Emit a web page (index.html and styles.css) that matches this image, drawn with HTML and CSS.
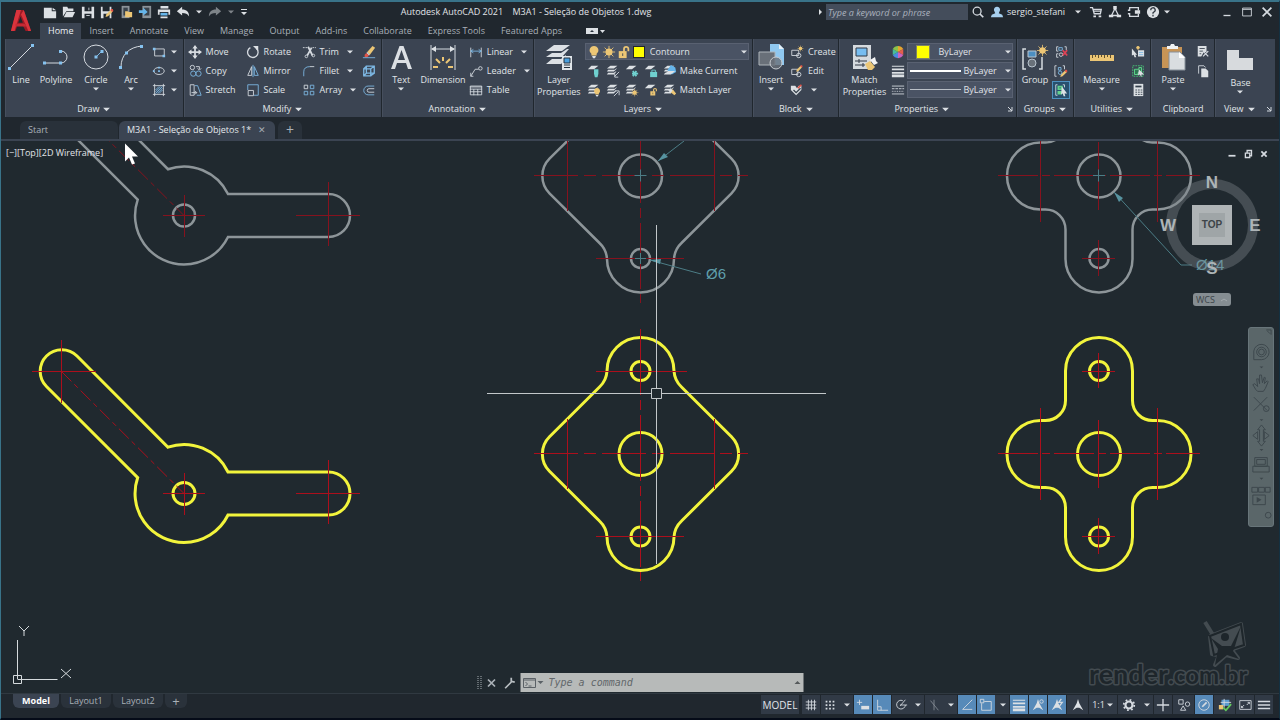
FILE: index.html
```html
<!DOCTYPE html>
<html lang="en">
<head>
<meta charset="utf-8">
<title>Autodesk AutoCAD 2021 - M3A1 - Seleção de Objetos 1.dwg</title>
<link rel="stylesheet" href="styles.css">
</head>
<body>
<svg class="defs" aria-hidden="true">
  <symbol id="caret" viewBox="0 0 8 8"><path class="fw" d="M1 2.500h6L4 5.500z"/></symbol>
  <symbol id="stack" viewBox="0 0 16 16"><path class="fw" d="M5 2h8l-4 3H1zM4 6.500h6l1.500-1.500h1L9 8.500H1l1.500-2zM4 10h5l2-1.500h1L9 12H1l1.500-2z"/></symbol>
  <symbol id="sheet" viewBox="0 0 16 16"><path class="fw" d="M5 2h8L8 6H1z"/></symbol>
  <symbol id="bulb" viewBox="0 0 16 16"><path class="fy" d="M8 1a5 5 0 0 0-3 9v2h6v-2a5 5 0 0 0-3-9z"/><path class="fw" d="M6 12.500h4v1L9 15H7l-1-1.500z"/></symbol>
  <symbol id="sun" viewBox="0 0 16 16"><circle class="fy" cx="8" cy="8" r="4"/><path class="y" d="M8 1v14M1 8h14M3 3l10 10M13 3L3 13"/></symbol>
  <symbol id="lock" viewBox="0 0 16 16"><path class="y" stroke-width="2" d="M8 8V4.500a2.500 2.500 0 0 1 5 0V7"/><path class="fy" d="M2 7h9v8H2z"/><path d="M6.500 9.500v3" stroke="#3b4552"/></symbol>
  <symbol id="pencil" viewBox="0 0 16 16"><path class="fy" d="M2 14l1-4 8-8 3 3-8 8z"/><path fill="#e05548" d="M10 3l1-2h3l1 3-2 2z"/></symbol>
  <symbol id="person" viewBox="0 0 16 16"><path class="fw" d="M8 1l1.500 5 4.500 8-4.500-3H6.500L2 14l4.500-8z"/></symbol>
</svg>

<div class="app">
<header class="top">
  <button class="logo" aria-label="Application menu"><svg viewBox="0 0 24 28"><path fill="#9c1a24" d="M7 2h8l8 23h-6l-3-6H8l-2 6H1z"/><path fill="#d9343d" d="M7 2h5L5 25H1zM15 2l8 23h-3L12 7z"/><path fill="#1f262d" d="M11.500 9l2.500 7H9z"/><path fill="#c52a34" d="M6 17h10l2 3H6z"/></svg></button>
  <div class="top-rows">
    <div class="titlebar">
      <div class="qat">
        <button aria-label="New"><svg class="i" viewBox="0 0 16 16"><path class="fw" d="M1 3h9v4h5v8H1zM11 3l4 3h-4z"/></svg></button>
        <button aria-label="Open"><svg class="i" viewBox="0 0 16 16"><path class="fw" d="M1 13V2h5l1 2h6v3H5zM5 8h10l-3 6H2z"/></svg></button>
        <button aria-label="Save"><svg class="i" viewBox="0 0 16 16"><path class="fw" fill-rule="evenodd" d="M1 2h14v13H1zM4 2v5h8V2zM4 10v5h8v-5z"/><path class="w" d="M6 12h4M9 3v3"/></svg></button>
        <button aria-label="Save as"><svg class="i" viewBox="0 0 16 16"><path class="fw" fill-rule="evenodd" d="M1 2h12v13H1zM3 2v5h8V2zM4 10v5h7v-5z"/><use href="#pencil" x="5" y="4" width="11" height="11"/></svg></button>
        <button aria-label="Open from web"><svg class="i" viewBox="0 0 16 16"><path fill="#8b9298" d="M3 1h9v14H3z"/><path fill="#39424b" d="M5 3h5v9H5z"/><path class="fy" d="M7 7h3l1 1h4v6H7z"/></svg></button>
        <button aria-label="Save to web"><svg class="i" viewBox="0 0 16 16"><path fill="#8b9298" d="M5 1h10v14H5z"/><path fill="#39424b" d="M7 3h6v9H7z"/><path fill="#65b5ea" d="M1 6h5V3l5 5-5 4V9H1z"/></svg></button>
        <button aria-label="Plot"><svg class="i" viewBox="0 0 16 16"><path class="fw" d="M4 1h9v3H4zM1 5h14v6h-2V8H3v3H1zM4 13h8v2H4z"/><path fill="#65b5ea" d="M4 9h8v3H4z"/></svg></button>
        <button aria-label="Undo"><svg class="i" viewBox="0 0 16 16"><path class="fw" d="M1 7l6-5v3c5 0 8 3 8 8-2-3-4-4-8-4v3z"/></svg></button>
        <button class="narrow" aria-label="Undo list"><svg class="caret"><use href="#caret"/></svg></button>
        <button class="dim" aria-label="Redo"><svg class="i" viewBox="0 0 16 16"><path class="fw" d="M15 7L9 2v3C4 5 1 8 1 13c2-3 4-4 8-4v3z"/></svg></button>
        <button class="narrow dim" aria-label="Redo list"><svg class="caret"><use href="#caret"/></svg></button>
        <button class="narrow" aria-label="Customize toolbar"><svg class="caret" viewBox="0 0 8 8"><path class="fw" d="M1 1h6v1H1zM1 4h6L4 7z"/></svg></button>
      </div>
      <h1>Autodesk AutoCAD 2021 &nbsp;&nbsp; M3A1 - Seleção de Objetos 1.dwg</h1>
      <button class="narrow" aria-label="Collapse search"><svg class="caret" viewBox="0 0 8 8"><path class="fw" d="M3 1l3 3-3 3z"/></svg></button>
      <input class="search" type="search" aria-label="Search help" placeholder="Type a keyword or phrase">
      <button class="tb" aria-label="Search"><svg class="i" viewBox="0 0 16 16"><circle class="w" cx="7" cy="7" r="4.500" stroke-width="1.500"/><path class="w" stroke-width="2" d="M10 10l4 4"/></svg></button>
      <button class="user"><svg class="i" viewBox="0 0 16 16"><path fill="#a6cfee" d="M8 2a3.500 3.500 0 0 0-3.500 4L6 9.500 2 11l-1 3h14l-1-3-4-1.500L11.500 6A3.500 3.500 0 0 0 8 2z"/></svg>sergio_stefani<svg class="caret"><use href="#caret"/></svg></button>
      <div class="services">
        <button aria-label="App store"><svg class="i" viewBox="0 0 16 16"><path class="w" stroke-width="1.500" d="M1 3h3l2 7h7l1-5H5M5 7h9"/><path class="fw" d="M5 12h3v2H5zM11 12h3v2h-3z"/></svg></button>
        <button aria-label="Autodesk account"><svg class="i" viewBox="0 0 16 16"><path class="w" stroke-width="1.500" d="M8 4L4 12h8z"/><path class="fw" d="M6 1h4v4H6zM1 11h5v3H1zM10 11h5v3h-5z"/></svg></button>
        <button aria-label="Stay connected"><svg class="i" viewBox="0 0 16 16"><path class="w" stroke-width="1.500" d="M1 6h2V3h10v3M1 10h2v3h10v-3"/><path class="fw" d="M9 6h6v4H9z"/></svg></button>
        <button aria-label="Help"><svg class="i" viewBox="0 0 16 16"><circle class="fw" cx="8" cy="8" r="7"/><path stroke="#303841" stroke-width="1.500" d="M5.500 6a2.500 2.500 0 1 1 3.500 2l-1 1v1M8 11v2"/></svg></button>
        <button class="narrow" aria-label="Help menu"><svg class="caret"><use href="#caret"/></svg></button>
      </div>
      <div class="window">
        <button aria-label="Minimize"><svg class="i" viewBox="0 0 16 16"><path class="w" stroke-width="1.500" d="M4 12h8"/></svg></button>
        <button aria-label="Maximize"><svg class="i" viewBox="0 0 16 16"><path class="w" d="M3 3.500h10v9H3zM3 5h10"/></svg></button>
        <button aria-label="Close"><svg class="i" viewBox="0 0 16 16"><path class="w" stroke-width="2" d="M3 3l10 10M13 3L3 13"/></svg></button>
      </div>
    </div>
    <nav class="tabs">
      <button class="on">Home</button><button>Insert</button><button>Annotate</button><button>View</button><button>Manage</button><button>Output</button><button>Add-ins</button><button>Collaborate</button><button>Express Tools</button><button>Featured Apps</button>
      <button class="minrib" aria-label="Minimize ribbon"><svg width="20" height="8" viewBox="0 0 20 8"><path class="fw" d="M0 1h12v6H0z"/><path fill="#28303a" d="M4 5h4L6 3z"/><path class="fw" d="M14 3h5l-2.500 3z"/></svg></button>
    </nav>
  </div>
</header>

<section class="ribbon">
  <div class="panel draw">
    <div class="tools">
      <button class="big w30"><svg class="bi" viewBox="0 0 28 28"><path class="w" d="M3 25L25 3"/><path class="fb" d="M1 24h3v3H1zM24 1h3v3h-3z"/></svg>Line</button>
      <button class="big w40"><svg class="bi" viewBox="0 0 28 28"><path class="w" d="M2 20h17a6 6 0 0 0 0-12"/><path class="fb" d="M1 18.500h3v3H1zM17 18.500h3v3h-3zM17 7h3v3h-3z"/></svg>Polyline</button>
      <button class="big w40"><svg class="bi" viewBox="0 0 28 28"><circle class="w" cx="14" cy="14" r="12"/><path class="b" d="M14 14l6-6"/><path class="fb" d="M12.500 12.500h3v3h-3zM18.500 7h3v3h-3z"/></svg>Circle<svg class="caret"><use href="#caret"/></svg></button>
      <button class="big w30"><svg class="bi" viewBox="0 0 28 28"><path class="w" d="M4 24C4 12 12 4 25 3"/><path class="fb" d="M2 23h3v3H2zM8 8.500h3v3H8zM23 2h3v3h-3z"/></svg>Arc<svg class="caret"><use href="#caret"/></svg></button>
      <div class="col first">
        <button aria-label="Rectangle"><svg class="i" viewBox="0 0 16 16"><path class="w" d="M3 4.500h11v8H3z"/><path class="fb" d="M1 3h3v3H1zM12 11h3v3h-3z"/></svg><svg class="caret"><use href="#caret"/></svg></button>
        <button aria-label="Ellipse"><svg class="i" viewBox="0 0 16 16"><ellipse class="w" cx="8" cy="8" rx="6" ry="4"/><path class="fb" d="M7 7h2v2H7zM1 7h2v2H1zM7 3h2v2H7z"/></svg><svg class="caret"><use href="#caret"/></svg></button>
        <button aria-label="Hatch"><svg class="i" viewBox="0 0 16 16"><path class="w" d="M3 1v14M13 1v14M1 3h14M1 13h14"/><path class="b" d="M4 8l4-4M4 12l8-8M8 12l4-4M4 10l6-6M6 12l6-6"/></svg><svg class="caret"><use href="#caret"/></svg></button>
      </div>
    </div>
    <button class="ptitle">Draw<svg class="caret"><use href="#caret"/></svg></button>
  </div>

  <div class="panel modify">
    <div class="tools">
      <div class="col w58">
        <button><svg class="i" viewBox="0 0 16 16"><path class="w" stroke-width="2" d="M8 3v10M3 8h10"/><path class="fw" d="M8 0l3 4H5zM8 16l3-4H5zM0 8l4-3v6zM16 8l-4-3v6z"/></svg>Move</button>
        <button><svg class="i" viewBox="0 0 16 16"><circle class="w" cx="5" cy="4" r="2.500"/><circle class="b" cx="6" cy="11" r="3"/><circle class="b" cx="12" cy="11" r="3"/><path class="w" d="M9 3h4v3M11 5l2 2 2-2"/></svg>Copy</button>
        <button><svg class="i" viewBox="0 0 16 16"><path class="w" d="M2.500 2v12H7V2zM4 11h6M8 9l2 2-2 2"/><path class="b" d="M8 3h3l4 11h-5"/></svg>Stretch</button>
      </div>
      <div class="col w56">
        <button><svg class="i" viewBox="0 0 16 16"><path class="w" stroke-width="1.500" d="M12 4a6 6 0 1 1-7-1"/><path class="fw" d="M8 1h6v6z"/></svg>Rotate</button>
        <button><svg class="i" viewBox="0 0 16 16"><path class="w" d="M6.500 3v10H2z"/><path class="b" d="M9.500 3v10H14zM8 1v14"/></svg>Mirror</button>
        <button><svg class="i" viewBox="0 0 16 16"><path class="b" d="M2 8V2h12v12H9"/><path class="w" d="M2.500 8.500h6v6h-6z"/></svg>Scale</button>
      </div>
      <div class="col w60 pushed">
        <button><svg class="i" viewBox="0 0 16 16"><path class="w" stroke-dasharray="2 1" d="M1 3h5M12 3h4"/><path class="w" stroke-width="2" d="M7 2l5 10M11 3L6 12"/><circle class="w" cx="5" cy="13" r="1.500"/><circle class="w" cx="13" cy="12" r="1.500"/></svg><span>Trim</span><svg class="caret"><use href="#caret"/></svg></button>
        <button><svg class="i" viewBox="0 0 16 16"><path class="b" d="M2 14V9q0-6 7-6"/><path class="w" d="M9 3h5"/></svg><span>Fillet</span><svg class="caret"><use href="#caret"/></svg></button>
        <button><svg class="i" viewBox="0 0 16 16"><path class="w" d="M2.500 2.500h4v4h-4z"/><path class="b" d="M9.500 2.500h4v4h-4zM2.500 9.500h4v4h-4zM9.500 9.500h4v4h-4z"/></svg><span>Array</span><svg class="caret"><use href="#caret"/></svg></button>
      </div>
      <div class="col">
        <button aria-label="Erase"><svg class="i" viewBox="0 0 16 16"><path class="fy" d="M6 8l6-7 3 2-6 8z"/><path class="fw" d="M5 9l1-1 3 3-1 1z"/><path fill="#e05548" d="M3 11l2-2 3 3-2 2H3z"/><path class="b" d="M1 14.500h14"/></svg></button>
        <button aria-label="Explode"><svg class="i" viewBox="0 0 16 16"><path class="b" stroke-width="1.500" d="M2 5.500h8v8H2zM5 2.500h9v8H5zM2 5.500l3-3M10 5.500l4-3M10 13.500l4-3M2 13.500l3-3"/></svg></button>
        <button aria-label="Offset"><svg class="i" viewBox="0 0 16 16"><path class="w" d="M14 6.500H8a2 2 0 0 0 0 4h6"/><path class="b" d="M14 3.500H7a5 5 0 0 0 0 10h7"/></svg></button>
      </div>
    </div>
    <button class="ptitle">Modify<svg class="caret"><use href="#caret"/></svg></button>
  </div>

  <div class="panel annotation">
    <div class="tools">
      <button class="big w38"><svg class="bi" viewBox="0 0 28 28"><path class="fw" fill-rule="evenodd" d="M12.500 3h4L25 26h-4l-2-6h-9l-2 6H4zM14.500 7L11 17h7z"/></svg>Text<svg class="caret"><use href="#caret"/></svg></button>
      <button class="big w50"><svg class="bi" viewBox="0 0 28 28"><path class="w" d="M2 2v25M26 2v25M3 6h22"/><path class="fw" d="M2 6l5-3v6zM26 6l-5-3v6z"/><path class="y" stroke-width="2" d="M4 24h5M24 24h-5M7 16l4 4M21 16l-4 4M14 14v4"/></svg>Dimension</button>
      <div class="col pushed">
        <button><svg class="i" viewBox="0 0 16 16"><path class="w" d="M2 3v11M14 3v11"/><path class="b" d="M2 7h12M5 5L2 7l3 2M11 5l3 2-3 2"/></svg><span>Linear</span><svg class="caret"><use href="#caret"/></svg></button>
        <button><svg class="i" viewBox="0 0 16 16"><path class="w" d="M2 14l5-8h4M2 10v4h3"/><circle class="w" cx="13" cy="5" r="2"/></svg><span>Leader</span><svg class="caret"><use href="#caret"/></svg></button>
        <button><svg class="i" viewBox="0 0 16 16"><path class="w" d="M1.500 3.500h13v10h-13zM1 7h14M1 10h14M5.500 7v7M10 7v7M1 4.500h14"/></svg><span>Table</span></button>
      </div>
    </div>
    <button class="ptitle">Annotation<svg class="caret"><use href="#caret"/></svg></button>
  </div>

  <div class="panel layers">
    <div class="tools">
      <button class="big w48"><svg class="bi" viewBox="0 0 28 28"><path class="fw" d="M9 2h16l-8 6H1zM7 10h9l6-4h2l-7 8H1zM7 16h9l5-4v4l-5 5H1z"/><path fill="#e1e6ea" d="M17 13h10v14H17z"/><path fill="#4aa0df" stroke="#26323e" d="M19 15h6v5h-6z"/><path stroke="#26323e" d="M19 22h6M19 24.500h6"/></svg>Layer<br>Properties</button>
      <div class="stackcol">
        <label class="combo"><svg class="i"><use href="#bulb"/></svg><svg class="i"><use href="#sun"/></svg><svg class="i"><use href="#lock"/></svg><i class="swatch"></i><select aria-label="Layer"><option>Contourn</option></select><svg class="caret"><use href="#caret"/></svg></label>
        <div class="iconrow">
          <button aria-label="Layer off"><svg class="i" viewBox="0 0 16 16"><use href="#sheet"/><path fill="#6fd0cf" d="M8 6h5v5l-1 4H9l-1-4z"/></svg></button>
          <button aria-label="Isolate"><svg class="i" viewBox="0 0 16 16"><use href="#stack"/><path class="w" d="M15 9l-5 5M10 11v4h4"/></svg></button>
          <button aria-label="Freeze"><svg class="i" viewBox="0 0 16 16"><use href="#sheet"/><path stroke="#6fd0cf" stroke-width="2" d="M8 11h7M9 8l4 6M13 8l-4 6"/></svg></button>
          <button aria-label="Lock layer"><svg class="i" viewBox="0 0 16 16"><use href="#sheet"/><path stroke="#6fd0cf" d="M9 10V7h4v3"/><path fill="#6fd0cf" d="M7 9h8v6H7z"/></svg></button>
          <button><svg class="i" viewBox="0 0 16 16"><use href="#stack"/><path fill="#65b5ea" d="M5 7l4-6 5 3 1 5-5 3z"/><path class="fw" d="M6 8h8l-4 3H2z"/></svg>Make Current</button>
        </div>
        <div class="iconrow">
          <button aria-label="All layers on"><svg class="i" viewBox="0 0 16 16"><use href="#stack"/><use href="#bulb" x="6" y="5" width="11" height="11"/></svg></button>
          <button aria-label="Unisolate"><svg class="i" viewBox="0 0 16 16"><use href="#stack"/><path class="w" d="M9 15l5-5M10 9h5v5"/></svg></button>
          <button aria-label="Thaw"><svg class="i" viewBox="0 0 16 16"><use href="#stack"/><use href="#sun" x="6" y="6" width="10" height="10"/></svg></button>
          <button aria-label="Unlock layer"><svg class="i" viewBox="0 0 16 16"><use href="#sheet"/><use href="#lock" x="6" y="5" width="10" height="10"/></svg></button>
          <button><svg class="i" viewBox="0 0 16 16"><use href="#stack"/><path class="fy" d="M8 10l3-3 4 5-2 2z"/><path class="fw" d="M6 8l3-2 2 3-3 2z"/></svg>Match Layer</button>
        </div>
      </div>
    </div>
    <button class="ptitle">Layers<svg class="caret"><use href="#caret"/></svg></button>
  </div>

  <div class="panel block">
    <div class="tools">
      <button class="big w34"><svg class="bi" viewBox="0 0 28 28"><path fill="#8fc8f0" d="M13 1h9l5 5v16H13z"/><path fill="#e6f1f8" d="M22 1l5 5h-5z"/><path fill="#697079" stroke="#aeb4ba" d="M2 9h16v13H2z"/><circle fill="#697079" fill-opacity=".8" stroke="#c7ccd1" cx="19" cy="20" r="6"/></svg>Insert<svg class="caret"><use href="#caret"/></svg></button>
      <div class="col">
        <button><svg class="i" viewBox="0 0 16 16"><path class="w" d="M2 6h8v6H2z"/><circle class="w" cx="10" cy="12" r="2.500"/><use href="#sun" x="8" y="0" width="8" height="8"/></svg>Create</button>
        <button><svg class="i" viewBox="0 0 16 16"><path class="w" d="M2 6h7v6H2z"/><circle class="w" cx="10" cy="12" r="2.500"/><use href="#pencil" x="6" y="1" width="9" height="9"/></svg>Edit</button>
        <button aria-label="Edit attributes"><svg class="i" viewBox="0 0 16 16"><path class="fw" d="M1 3h5l2 3 2-3h3v5l-6 6-6-6z"/><path stroke="#35404c" stroke-width="1.500" d="M4 8l3 3 5-5"/><path stroke="#e05548" stroke-width="2" d="M9 6l4-4"/></svg><svg class="caret"><use href="#caret"/></svg></button>
      </div>
    </div>
    <button class="ptitle">Block<svg class="caret"><use href="#caret"/></svg></button>
  </div>

  <div class="panel properties">
    <div class="tools">
      <button class="big w48"><svg class="bi" viewBox="0 0 28 28"><path fill="#d5dade" d="M3 2h18v24H3z"/><path fill="#77bdf0" stroke="#303944" d="M6 5h11v8H6z"/><path stroke="#303944" d="M5 18h12M5 22h10M9 16v4M13 20v4"/><path class="fy" d="M15 21l5-3 5 6-3 3h-4z"/><path fill="#f3f4f5" d="M20 17l5-3 1 4 2 2-4 2z"/></svg>Match<br>Properties</button>
      <div class="col props">
        <svg class="i" viewBox="0 0 16 16"><path fill="#e5a62f" d="M8 8V1a7 7 0 0 1 6 3.500z"/><path fill="#e35f4d" d="M8 8l6-3.500v7z"/><path fill="#cf63bd" d="M8 8l6 3.500A7 7 0 0 1 8 15z"/><path fill="#4b8be0" d="M8 8v7a7 7 0 0 1-6-3.500z"/><path fill="#48bd9a" d="M8 8l-6 3.500v-7z"/><path fill="#8bc34a" d="M8 8L2 4.500A7 7 0 0 1 8 1z"/></svg>
        <svg class="i" viewBox="0 0 16 16"><path class="fw" d="M1 2h14v1H1zM1 5h14v2H1zM1 9h14v2H1zM1 12h14v3H1z"/></svg>
        <svg class="i" viewBox="0 0 16 16"><path class="w" d="M1 3.500h14M1 12.500h14"/><path class="w" stroke-dasharray="3 1" d="M1 6.500h14"/><path class="w" stroke-dasharray="1 1" d="M1 9.500h14"/></svg>
      </div>
      <div class="selects">
        <label class="combo"><i class="swatch far"></i><select aria-label="Object color"><option>ByLayer</option></select><svg class="caret"><use href="#caret"/></svg></label>
        <label class="combo"><i class="rule thick"></i><select aria-label="Lineweight"><option>ByLayer</option></select><svg class="caret"><use href="#caret"/></svg></label>
        <label class="combo"><i class="rule"></i><select aria-label="Linetype"><option>ByLayer</option></select><svg class="caret"><use href="#caret"/></svg></label>
      </div>
    </div>
    <div class="pfoot"><button class="ptitle">Properties<svg class="caret"><use href="#caret"/></svg></button><button class="launch" aria-label="Properties palette"><svg viewBox="0 0 8 8"><path class="w" d="M2 2l4 4M6 2v4H2"/></svg></button></div>
  </div>

  <div class="panel groups">
    <div class="tools">
      <button class="big w34"><svg class="bi" viewBox="0 0 28 28"><path class="w" stroke-width="1.500" d="M5 6H2v20h3M18 26h3V14"/><path fill="#4c8fc2" stroke="#b8c4ce" d="M7 8h8v6H7z"/><circle fill="#69717a" stroke="#b8c4ce" cx="11" cy="20" r="4"/><use href="#sun" x="15" y="1" width="13" height="13"/></svg>Group</button>
      <div class="col">
        <button aria-label="Ungroup"><svg class="i" viewBox="0 0 16 16"><path class="w" d="M5 2H3v5h2M12 2h2v4M5 10H3v4h2"/><path class="b" d="M5.500 3h4v3h-4z"/><circle class="w" cx="8" cy="11" r="2"/><path stroke="#df4255" stroke-width="2" d="M10 6l5 6M15 6l-5 6"/></svg></button>
        <button aria-label="Group edit"><svg class="i" viewBox="0 0 16 16"><path class="w" d="M3 2H1v12h2M10 2h2v4"/><path class="b" d="M5 4h3v3H5z"/><circle class="b" cx="7" cy="10" r="2"/><use href="#pencil" x="6" y="6" width="10" height="10"/></svg></button>
        <button class="active" aria-label="Group selection"><svg class="i" viewBox="0 0 16 16"><path class="w" d="M4 2H2v12h2M10 2h2v3"/><path stroke="#63d18e" stroke-width="2" d="M5 4h4v3H5zM5 10h3v2H5z"/><path class="fw" d="M9 4l6 8h-3l1 3h-2l-1-3-2 1z"/></svg></button>
      </div>
    </div>
    <button class="ptitle">Groups<svg class="caret"><use href="#caret"/></svg></button>
  </div>

  <div class="panel utilities">
    <div class="tools">
      <button class="big w54"><svg class="bi" viewBox="0 0 28 28"><path class="fy" d="M2 12h24v6H2z"/><path stroke="#61512d" d="M4.500 12v3M7.500 12v2M10.500 12v3M13.500 12v2M16.500 12v3M19.500 12v2M22.500 12v3"/></svg>Measure<svg class="caret"><use href="#caret"/></svg></button>
      <div class="col">
        <button aria-label="Quick select"><svg class="i" viewBox="0 0 16 16"><path class="fw" d="M1 4l6 7H5l1 3H4L3 11l-2 1zM8 6h7v7H8z"/><path class="b" d="M9 8.500h5M9 11h5"/><path class="y" stroke-width="2" d="M8 1v4M6 3h4"/></svg></button>
        <button aria-label="Select all"><svg class="i" viewBox="0 0 16 16"><path stroke="#48c877" stroke-dasharray="2 1" d="M2 2h12v12H2z"/><path fill="#2d7652" stroke="#63df91" d="M4 6h5V4h3v6H8v2H4z"/><path class="fw" d="M9 6l6 6h-3v3l-2-3-2 1z"/></svg></button>
        <button aria-label="Calculator"><svg class="i" viewBox="0 0 16 16"><path class="fw" d="M3 1h11v14H3z"/><path stroke="#35404c" stroke-width="2" d="M5 4h7"/><path stroke="#35404c" stroke-dasharray="2 1" d="M5 8h8M5 10.500h8M5 13h8"/></svg></button>
      </div>
    </div>
    <button class="ptitle">Utilities<svg class="caret"><use href="#caret"/></svg></button>
  </div>

  <div class="panel clipboard">
    <div class="tools">
      <button class="big w42"><svg class="bi" viewBox="0 0 28 28"><path fill="#c79456" d="M3 4h20v21H3z"/><path fill="#f1f3f4" d="M8 6V3h3l1-2h3l1 2h3v3z"/><path fill="#d9dde0" stroke="#87909a" d="M10 9h11l5 5v13H10z"/><path fill="#fff" d="M20 9l6 6h-6z"/></svg>Paste<svg class="caret"><use href="#caret"/></svg></button>
      <div class="col">
        <button aria-label="Cut"><svg class="i" viewBox="0 0 16 16"><path class="fw" d="M2 1h10v7H9l-3 5H2z"/><path stroke="#39434f" d="M4 4h6M4 7h4M4 10h2"/><path class="w" stroke-width="1.500" d="M8 7l6 6M14 7l-6 6"/></svg></button>
        <button aria-label="Copy clip"><svg class="i" viewBox="0 0 16 16"><path class="w" d="M3 11V2h6l2 2"/><path class="fw" d="M6 5h5l3 3v7H6z"/></svg></button>
      </div>
    </div>
    <button class="ptitle">Clipboard</button>
  </div>

  <div class="panel view">
    <div class="tools">
      <button class="big base w48"><svg class="bi" viewBox="0 0 28 28"><path fill="#d7dadd" d="M1 7h12v8h14v12H1z"/></svg>Base<svg class="caret"><use href="#caret"/></svg></button>
    </div>
    <div class="pfoot"><button class="ptitle">View<svg class="caret"><use href="#caret"/></svg></button><button class="launch" aria-label="View settings"><svg viewBox="0 0 8 8"><path class="w" d="M2 2l4 4M6 2v4H2"/></svg></button></div>
  </div>
</section>

<nav class="files">
  <button class="file">Start</button>
  <button class="file on">M3A1 - Seleção de Objetos 1*<span>✕</span></button>
  <button class="file add" aria-label="New drawing">+</button>
</nav>

<main class="canvas">
  <svg class="drawing" viewBox="1 141 1278 552" preserveAspectRatio="xMidYMid slice">
    <defs>
      <g id="lever">
        <path d="M168 447.200A49 49 0 0 1 228 472H328.500a21.500 21.500 0 0 1 0 43H228A49 49 0 0 1 184 542.500A49 49 0 0 1 137.700 477.600L46.500 386.500A21.500 21.500 0 0 1 77 356z"/>
        <circle cx="184" cy="493.500" r="11"/>
      </g>
      <g id="lever-axes">
        <path d="M32 371.500h64M61.500 340v63M163 493.500h42M184.500 473v42M296 493.500h64M328.500 460v64"/>
        <path stroke-dasharray="14 4 5 4" d="M61.500 371.500L184 493.500"/>
      </g>
      <g id="plate">
        <path d="M607 371A33.500 33.500 0 0 1 674 371A24 24 0 0 0 681.500 387L731.500 436.700A24.500 24.500 0 0 1 731.500 471.300L681.500 521A24 24 0 0 0 674 537A33.500 33.500 0 0 1 607 537A24 24 0 0 0 599.500 521L549.500 471.300A24.500 24.500 0 0 1 549.500 436.700L599.500 387A24 24 0 0 0 607 371z"/>
        <circle cx="640.500" cy="371" r="9.500"/><circle cx="640.500" cy="454" r="21.500"/><circle cx="640.500" cy="536.500" r="9.500"/>
      </g>
      <g id="plate-axes">
        <path stroke-dasharray="44 6 12 6" d="M534 453.500h214"/>
        <path stroke-dasharray="66 5 10 5" d="M640.500 329v252"/>
        <path d="M567.500 419v70M714.500 419v70M596 371.500h91M596 536.500h88"/>
      </g>
      <g id="cross">
        <path d="M1065.500 371a33.500 33.500 0 0 1 67 0v29.500a20 20 0 0 0 20 20h5a33.500 33.500 0 0 1 0 67h-5a20 20 0 0 0-20 20V537a33.500 33.500 0 0 1-67 0v-29.500a20 20 0 0 0-20-20h-5a33.500 33.500 0 0 1 0-67h5a20 20 0 0 0 20-20z"/>
        <circle cx="1099" cy="371" r="9.500"/><circle cx="1099" cy="454" r="21.500"/><circle cx="1099" cy="536.500" r="9.500"/>
      </g>
      <g id="cross-axes">
        <path stroke-dasharray="40 4 8 4" d="M998 453.500h202"/>
        <path d="M1040.500 408v92M1157.500 408v92M1082 371.500h33M1098.500 353v35M1082 536.500h33M1098.500 518v36M1098.500 420v68"/>
      </g>
    </defs>
    <g class="old" transform="translate(0 -278)"><use href="#lever"/><use href="#plate"/><use href="#cross"/></g>
    <g class="axis old-axis" transform="translate(0 -278)"><use href="#lever-axes"/><use href="#plate-axes"/><use href="#cross-axes"/></g>
    <g class="new"><use href="#lever"/><use href="#plate"/><use href="#cross"/></g>
    <g class="axis"><use href="#lever-axes"/><use href="#plate-axes"/><use href="#cross-axes"/></g>
    <g class="dims">
      <path d="M684 141l-26 20M650 260l51 14M634.500 175.500h12M640.500 169.500v12M635 258.500h11M640.500 253v11M1093 175.500h12M1098.500 169.500v12M1114 192l67 73h11"/>
      <path class="tip" d="M658 161l6-8 4 4zM650 260l11-1-1 5zM1114 192l9 6-4 4z"/>
      <text x="706" y="279">Ø6</text><text x="1196" y="270">Ø14</text>
    </g>
    <g class="crosshair"><path d="M487 393.500h164M662 393.500h164M656.500 225v163M656.500 399v165M651.500 388.500h10v10h-10z"/></g>
    <g class="ucs"><path d="M17.500 640v39M17.500 679.500h40M13.500 675.500h8v8h-8zM19 626l5 5 5-5M24 631v5M61 669l10 9M71 669l-10 9"/></g>
    <g class="watermark">
      <text x="1089" y="684" class="brand">render<tspan class="domain">.com.br</tspan></text>
      <path class="halo" d="M1205 622l8 13M1210 636l31-12 3 21-11 4M1210 636l2 18 5 1M1214 640l8 8-7 17 11-10 12 3-7-9 8-19"/>
      <path class="board" d="M1210 636l31-12 3 21-30 10z"/>
      <path class="body" d="M1211 638l11 8h9l10-20-6 20-2 5 6 8-12-4-12 10 3-16z"/>
      <circle class="body" cx="1225" cy="637" r="4"/>
    </g>
  </svg>
  <button class="viewlabel">[−][Top][2D Wireframe]</button>
  <svg class="pointer" viewBox="0 0 14 22"><path fill="#fff" d="M1 1v18l4-4 3 7 3-1-3-7h6z"/></svg>
  <div class="docwin">
    <button aria-label="Minimize drawing"><svg class="i" viewBox="0 0 16 16"><path class="w" stroke-width="2" d="M4 10h8"/></svg></button>
    <button aria-label="Restore drawing"><svg class="i" viewBox="0 0 16 16"><path class="w" stroke-width="1.500" d="M5 7h5v5H5zM7 7V4h5v6h-2"/></svg></button>
    <button aria-label="Close drawing"><svg class="i" viewBox="0 0 16 16"><path class="w" stroke-width="2" d="M5 5l6 6M11 5l-6 6"/></svg></button>
  </div>
  <div class="cube">
    <svg viewBox="0 0 104 104"><circle cx="52" cy="52" r="41" fill="none" stroke="#7c8589" stroke-opacity=".4" stroke-width="10"/><g class="compass"><text x="52" y="15">N</text><text x="8" y="58">W</text><text x="95" y="58">E</text><text x="52" y="101">S</text></g></svg>
    <button><span>TOP</span></button>
  </div>
  <button class="wcs">WCS<svg class="caret" viewBox="0 0 8 8"><path stroke="#a3aaae" d="M1 5l3-2 3 2"/></svg></button>
  <div class="navbar">
    <svg viewBox="0 0 25 200"><path class="nv" d="M18 2h5v5M19 3l3 3M5 33V24a8 8 0 1 1 8 9z"/><circle class="nv" cx="13" cy="25" r="5"/><circle class="nv" cx="13" cy="25" r="3"/><path class="nv" d="M7 64l-3-5 2-1 3 3-1-8h2l1 5V49h2l1 8 2-6 1 1-1 6 3-3 1 1-3 7-2 3H9zM5 72l14 14M19 72L5 86"/><circle class="nv" cx="18" cy="84" r="3"/><path class="nv" d="M13 101l4 5h-2v12h2l-4 5-4-5h2v-12H9zM4 112l5-4v8zM21 112l-5-4v8zM6 135h13v9H6zM8 137h9v5H8zM4 144h17v6H4zM3 166h6v5H3zM10 166h6v5h-6zM17 166h5v5h-5zM4 174h13v10H4z"/><path fill="#3d474c" d="M8 176l5 3-5 3zM11 40h4l-2 2zM11 95h4l-2 2zM11 126h4l-2 2zM11 156h4l-2 2z"/><circle class="nv" cx="20" cy="195" r="3"/></svg>
  </div>
  <div class="command">
    <svg class="grip" viewBox="0 0 6 16"><path stroke="#a8b0b5" stroke-dasharray="1 1" d="M1.500 1v14M4.500 1v14"/></svg>
    <button aria-label="Close command line"><svg class="i" viewBox="0 0 16 16"><path stroke="#aab1b7" stroke-width="2" d="M4 4l8 8M12 4l-8 8"/></svg></button>
    <button aria-label="Customize command line"><svg class="i" viewBox="0 0 16 16"><path stroke="#b6bcc0" stroke-width="2" d="M3 14l8-8M10 2v4l4 1"/></svg></button>
    <label class="cmdbox"><svg viewBox="0 0 22 12"><path stroke="#5b6166" d="M1 1.500h12v9H1zM1 3h12M3 5l2 2-2 2M6 9h3"/><path fill="#5b6166" d="M15 4h6l-3 3z"/></svg><input type="text" aria-label="Command" placeholder="Type a command"><svg class="caret" viewBox="0 0 8 8"><path fill="#55595b" d="M1 5h6L4 2z"/></svg></label>
  </div>
</main>

<footer class="bottom">
  <nav class="layouts"><button class="on">Model</button><button>Layout1</button><button>Layout2</button><button class="add" aria-label="New layout">+</button></nav>
  <div class="status">
    <button class="model">MODEL</button>
    <button aria-label="Grid"><svg class="i" viewBox="0 0 16 16"><path class="w" d="M5 2v12M8.500 2v12M12 2v12M2 4.500h12M2 8h12M2 11.500h12"/></svg></button>
    <button aria-label="Snap"><svg class="i" viewBox="0 0 16 16"><path class="w" stroke-width="2" stroke-dasharray="2 2" d="M3 4h10M3 8h10M3 12h10"/></svg></button>
    <button class="ar" aria-label="Snap menu"><svg class="caret"><use href="#caret"/></svg></button>
    <button class="on" aria-label="Dynamic input"><svg class="i" viewBox="0 0 16 16"><path class="w" d="M1 5h6M4 2v6"/><path class="fw" d="M6 9h9v4H6z"/></svg></button>
    <button class="on" aria-label="Ortho"><svg class="i" viewBox="0 0 16 16"><path class="w" d="M3 2v12h12M3 10h4v4"/></svg></button>
    <button aria-label="Polar tracking"><svg class="i" viewBox="0 0 16 16"><path class="w" d="M13 8a5 5 0 1 1-3-5M7 8h8M7 9l6-7"/></svg></button>
    <button class="ar" aria-label="Polar menu"><svg class="caret"><use href="#caret"/></svg></button>
    <button class="dim" aria-label="Isometric"><svg class="i" viewBox="0 0 16 16"><path class="w" d="M4 3l9 11M8 2v12"/></svg></button>
    <button class="ar" aria-label="Isometric menu"><svg class="caret"><use href="#caret"/></svg></button>
    <button class="on" aria-label="Object tracking"><svg class="i" viewBox="0 0 16 16"><path class="w" d="M14 2L3 13h11"/></svg></button>
    <button class="on" aria-label="Object snap"><svg class="i" viewBox="0 0 16 16"><path class="w" d="M6 4h8v10H3V6M1.500 1.500h4v4h-4z"/></svg></button>
    <button class="ar" aria-label="Snap list"><svg class="caret"><use href="#caret"/></svg></button>
    <button class="on" aria-label="Lineweight"><svg class="i" viewBox="0 0 16 16"><path class="fw" d="M1 2h14v1H1zM1 5h14v2H1zM1 9h14v2H1zM1 12h14v3H1z"/></svg></button>
    <button class="on" aria-label="Annotation visibility"><svg class="i" viewBox="0 0 16 16"><use href="#person"/><circle class="w" cx="12" cy="4" r="2"/></svg></button>
    <button class="on" aria-label="Auto scale"><svg class="i" viewBox="0 0 16 16"><use href="#person"/><path class="w" stroke-width="1.500" d="M13 1l-3 4h4l-3 4"/></svg></button>
    <button class="wd" aria-label="Annotation scale"><svg class="i"><use href="#person"/></svg></button>
    <button class="scale">1:1<svg class="caret"><use href="#caret"/></svg></button>
    <button class="wd" aria-label="Workspace"><svg class="i" viewBox="0 0 16 16"><circle class="w" cx="8" cy="8" r="4" stroke-width="2.500"/><circle class="w" cx="8" cy="8" r="6" stroke-width="2" stroke-dasharray="2 2.710"/></svg></button>
    <button class="ar" aria-label="Workspace menu"><svg class="caret"><use href="#caret"/></svg></button>
    <button aria-label="Annotation monitor"><svg class="i" viewBox="0 0 16 16"><path class="w" stroke-width="1.500" d="M8 1v14M1 8h14"/></svg></button>
    <button class="wd" aria-label="Isolate objects"><svg class="i" viewBox="0 0 16 16"><path class="w" d="M2 2h5v5H2zM7 9l-3 5h6z"/><circle class="w" cx="12" cy="7" r="2.500"/></svg></button>
    <button class="on" aria-label="Hardware acceleration"><svg class="i" viewBox="0 0 16 16"><circle class="w" cx="8" cy="8" r="6"/><path class="w" stroke-width="2" d="M6 10l5-5"/></svg></button>
    <button class="wd" aria-label="Drawing health"><svg class="i" viewBox="0 0 16 16"><path fill="#5c9bcf" d="M4 2h9v7H4z"/><path class="w" d="M7 1v10M3 5h12"/><path class="fy" d="M1 8h5v5H1z"/><path stroke="#63c95d" stroke-width="2" d="M6 11l3 3 6-7"/></svg></button>
    <button aria-label="Clean screen"><svg class="i" viewBox="0 0 16 16"><path class="w" d="M2 3h13v10H2zM4 11l3-3M10 8l3-3M4 9v2h2M11 5h2v2"/></svg></button>
    <button aria-label="Customization"><svg class="i" viewBox="0 0 16 16"><path class="w" stroke-width="1.500" d="M1 4h14M1 8h14M1 12h14"/></svg></button>
  </div>
</footer>
</div>
</body>
</html>
```
FILE: styles.css
```css
* { box-sizing: border-box; }
body { margin: 0; background: #050b18; color: #e0e4e9; font: 9px/12px "Open Sans", "Noto Sans", sans-serif; }
button, input, select { font: inherit; color: inherit; background: none; border: 0; padding: 0; margin: 0; }
button { display: flex; align-items: center; justify-content: center; white-space: nowrap; }
svg { display: block; flex: none; fill: none; }
.defs { position: absolute; width: 0; height: 0; }
.w { stroke: #d5dae0; }
.b { stroke: #7db8e4; }
.y { stroke: #ecc675; }
.fw { fill: #dce0e4; }
.fb { fill: #85c2ef; }
.fy { fill: #ecc675; }
.i { width: 14px; height: 14px; }
.bi { width: 28px; height: 28px; }
.caret { width: 8px; height: 8px; }
.dim { opacity: .5; }

.app { min-height: 100vh; display: flex; flex-direction: column; background: #20272e; border-top: 2px solid #397389; border-left: 1px solid #397389; border-right: 1px solid #133142; border-bottom: 2px solid #050b18; }

.top { display: flex; }
.logo { width: 39px; }
.logo svg { width: 22px; height: 28px; }
.top-rows { flex: 1; min-width: 0; }
.titlebar { display: flex; align-items: center; height: 21px; padding: 0 2px 1px 0; }
.qat { display: flex; }
.qat button { width: 19px; height: 20px; }
.qat .narrow { width: 13px; }
.titlebar h1 { flex: 1; margin: 0; padding-right: 12px; font-size: 9px; font-weight: 400; text-align: center; white-space: nowrap; }
.narrow { width: 12px; }
.search { width: 142px; height: 16px; background: #444d5b; padding: 0 2px; font-style: italic; }
.search::placeholder { color: #abb2be; }
.tb { width: 20px; }
.user { gap: 3px; padding-left: 2px; }
.user .caret { margin-left: 6px; }
.services { display: flex; margin: 0 45px 0 4px; }
.services button { width: 19px; }
.services .narrow { width: 10px; }
.window { display: flex; }
.window button { width: 20px; }
.tabs { display: flex; height: 16px; }
.tabs button { padding: 0 8px; color: #a9b0b8; }
.tabs .on { background: #3b4452; color: #eceff2; }
.tabs .minrib { padding-left: 16px; }

.ribbon { display: flex; gap: 1px; padding: 0 4px; height: 78px; }
.panel { background: #3b4452; min-width: 0; display: flex; flex-direction: column; border-left: 1px solid #464f5d; }
.draw { flex: 178 1 0; }
.modify { flex: 198 1 0; }
.annotation { flex: 151 1 0; }
.layers { flex: 219 1 0; }
.block { flex: 85 1 0; }
.properties { flex: 177 1 0; }
.groups { flex: 55 1 0; }
.utilities { flex: 76 1 0; }
.clipboard { flex: 63 1 0; }
.view { flex: 59 1 0; }
.tools { flex: 1; display: flex; padding-top: 3px; align-items: flex-start; }
.big { flex-direction: column; justify-content: flex-start; text-align: center; padding-top: 1px; }
.big .bi { margin-bottom: 3px; }
.big .caret { margin-top: -1px; }
.base .bi { margin-bottom: 6px; }
.w30 { width: 30px; } .w34 { width: 34px; } .w38 { width: 38px; } .w40 { width: 40px; }
.w42 { width: 42px; } .w48 { width: 48px; } .w50 { width: 50px; } .w54 { width: 54px; }
.col { display: grid; grid-template-rows: repeat(3, 19px); align-items: center; flex: none; }
.col button { justify-content: flex-start; gap: 4px; height: 18px; padding: 0 2px; }
.first { margin-left: 4px; }
.w56 { width: 56px; } .w58 { width: 58px; } .w60 { width: 60px; }
.modify .tools { padding-left: 1px; }
.pushed span + .caret { margin-left: 3px; }
.block .col .caret { margin-left: 2px; }
.col .active { background: #28506e; border: 1px solid #4d91bf; padding: 0 1px; }
.ptitle { width: 100%; height: 16px; gap: 3px; }
.ptitle .caret { width: 9px; height: 9px; }
.pfoot { display: flex; }
.launch { width: 12px; flex: none; }
.launch svg { width: 8px; height: 8px; }
.stackcol { flex: 1; display: grid; grid-template-rows: repeat(3, 19px); padding: 0 3px 0 2px; align-items: center; }
.iconrow { display: flex; }
.iconrow button { width: 19px; padding-left: 2px; justify-content: flex-start; gap: 3px; }
.iconrow button:last-child { width: auto; }
.combo { display: flex; align-items: center; height: 17px; background: #4a5364; border: 1px solid #596171; }
.stackcol .combo { padding-left: 1px; gap: 1px; }
.combo select { flex: 1; min-width: 0; appearance: none; outline: 0; }
.swatch { width: 12px; height: 12px; background: #ffff00; border: 1px solid #22262b; margin: 0 4px 0 1px; }
.far { width: 14px; height: 14px; border-color: #7e8462; margin: 0 8px; }
.selects { flex: 1; display: grid; grid-template-rows: repeat(3, 19px); align-items: center; padding-right: 3px; }
.props { width: 19px; justify-content: center; }
.rule { width: 51px; height: 1px; background: #b9bfc7; margin: 0 2px; }
.thick { height: 2px; background: #fff; }

.files { display: flex; height: 24px; padding: 4px 0 0 17px; border-bottom: 2px solid #3b4452; }
.file { height: 18px; background: #29313a; color: #aab1b9; border-radius: 6px 6px 0 0; padding: 0 8px; justify-content: flex-start; width: 98px; margin-left: 2px; }
.file.on { background: #3b4452; color: #e5e9ed; width: 156px; gap: 7px; margin-left: 1px; }
.file.add { width: 24px; justify-content: center; padding: 0; margin-left: 3px; font-size: 14px; }
.file span { color: #a5acb4; }

.canvas { position: relative; flex: 1; min-height: 300px; background: #20292f; overflow: hidden; }
.drawing { position: absolute; inset: 0; width: 100%; height: 100%; }
.old { stroke: #8d9599; stroke-width: 2.5; }
.new { stroke: #f2f43c; stroke-width: 3; }
.axis { stroke: #ac0f1c; stroke-width: 1; }
.old-axis { stroke: #86121e; }
.dims { stroke: #4c7d86; }
.dims .tip { fill: #5793a0; stroke: none; }
.dims text { fill: #5f9eab; stroke: none; font: 15px "Liberation Sans", sans-serif; }
.crosshair { stroke: #c2c7ca; }
.ucs { stroke: #d5dadd; }
.watermark text { fill: #1e262b; stroke: #434b50; stroke-width: 3; stroke-linejoin: round; paint-order: stroke; font: 700 27px Lato, sans-serif; }
.watermark .domain { font-size: 24px; }
.watermark .halo { stroke: #434b50; stroke-width: 4; stroke-linejoin: round; }
.watermark .board { fill: #444c51; stroke: #1e262b; stroke-width: 2; }
.watermark .body { fill: #1e262b; }
.viewlabel { position: absolute; left: 5px; top: 6px; }
.pointer { position: absolute; left: 123px; top: 1px; width: 14px; height: 23px; }
.docwin { position: absolute; right: 7px; top: 6px; display: flex; }
.docwin button { width: 16px; }
.cube { position: absolute; right: 15px; top: 32px; width: 104px; height: 104px; }
.compass { fill: #adb4b7; font: 700 17px "Liberation Sans", sans-serif; text-anchor: middle; }
.cube button { position: absolute; left: 32px; top: 32px; width: 40px; height: 40px; background: #afb4b6; }
.cube button span { background: #9fa5a7; color: #3d4448; padding: 6px 3px; font: 700 10px/12px "Liberation Sans", sans-serif; }
.wcs { position: absolute; right: 48px; top: 152px; width: 38px; height: 13px; border-radius: 3px; background: #858d92; color: #3b4449; justify-content: space-between; padding: 0 3px; }
.navbar { position: absolute; right: 5px; top: 186px; width: 26px; height: 200px; background: #5a6669; border: 1px solid #68757a; border-radius: 3px; }
.nv { stroke: #3d474c; }
.command { position: absolute; bottom: 1px; left: 50%; transform: translateX(-50%); display: flex; align-items: center; height: 19px; }
.command button { width: 18px; }
.command .grip { width: 6px; height: 16px; }
.cmdbox { display: flex; align-items: center; width: 283px; height: 19px; background: #b7bab9; padding: 0 2px; margin-left: 2px; gap: 4px; }
.cmdbox svg:first-child { width: 22px; height: 12px; }
.cmdbox input { flex: 1; min-width: 0; font: italic 10px "DejaVu Sans Mono", monospace; color: #333; }
.cmdbox input::placeholder { color: #62676a; }

.bottom { display: flex; justify-content: space-between; height: 25px; border-top: 1px solid #303941; }
.layouts { display: flex; padding-left: 12px; height: 14px; }
.layouts button { background: #2a323b; border-radius: 0 0 6px 6px; color: #a9b0b7; width: 50px; margin-right: 2px; }
.layouts .on { width: 46px; background: #3b4452; color: #fff; font-weight: 700; }
.layouts .add { width: 22px; font-size: 13px; }
.status { display: flex; padding: 1px 6px 4px 0; }
.status button { width: 19px; background: #313a46; border-left: 1px solid #20272e; }
.status .dim { opacity: 1; }
.status .dim svg { opacity: .5; }
.status .on { background: #578ab9; }
.status .ar { width: 14px; border-left-color: #313a46; }
.status .wd { width: 22px; }
.status .model { width: 41px; border-right: 2px solid #20272e; font-size: 10px; }
.status .scale { width: 29px; gap: 1px; }
```
